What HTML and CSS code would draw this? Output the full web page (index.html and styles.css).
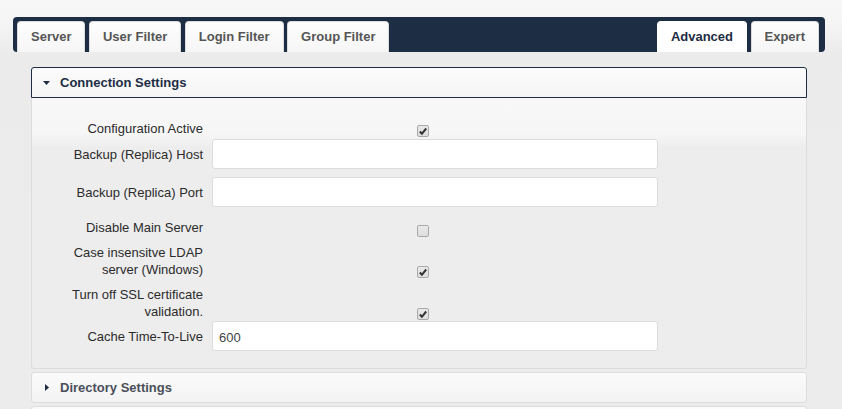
FILE: index.html
```html
<!DOCTYPE html>
<html lang="en">
<head>
<meta charset="utf-8">
<title>LDAP Advanced</title>
<link rel="stylesheet" href="styles.css">
</head>
<body>
<div class="page">
  <nav class="tabbar">
    <div class="tabgroup">
      <a class="tab">Server</a>
      <a class="tab">User Filter</a>
      <a class="tab">Login Filter</a>
      <a class="tab">Group Filter</a>
    </div>
    <div class="tabgroup">
      <a class="tab tab--active">Advanced</a>
      <a class="tab">Expert</a>
    </div>
  </nav>

  <div class="sections">
    <section class="acc acc--open">
      <h3 class="acc-head"><span class="caret"><svg width="7" height="4" viewBox="0 0 7 4"><path d="M0 0H7L3.5 4Z" fill="#1d2d44"/></svg></span>Connection Settings</h3>
      <div class="acc-body">
        <div class="row row--first row--check">
          <label class="lbl">Configuration Active</label>
          <span class="ctrl"><span class="cb"><svg width="11" height="11" viewBox="0 0 11 11"><path d="M2 5.5 L4.3 8 L9 2.2" fill="none" stroke="#333" stroke-width="2.2"/></svg></span></span>
        </div>
        <div class="row row--tight row--input">
          <label class="lbl">Backup (Replica) Host</label>
          <span class="ctrl"><input class="txt" type="text" value=""></span>
        </div>
        <div class="row row--input">
          <label class="lbl">Backup (Replica) Port</label>
          <span class="ctrl"><input class="txt" type="text" value=""></span>
        </div>
        <div class="row row--loose row--check">
          <label class="lbl">Disable Main Server</label>
          <span class="ctrl"><span class="cb cb--low"></span></span>
        </div>
        <div class="row row--check">
          <label class="lbl">Case insensitve LDAP server (Windows)</label>
          <span class="ctrl"><span class="cb"><svg width="11" height="11" viewBox="0 0 11 11"><path d="M2 5.5 L4.3 8 L9 2.2" fill="none" stroke="#333" stroke-width="2.2"/></svg></span></span>
        </div>
        <div class="row row--check">
          <label class="lbl">Turn off SSL certificate validation.</label>
          <span class="ctrl"><span class="cb"><svg width="11" height="11" viewBox="0 0 11 11"><path d="M2 5.5 L4.3 8 L9 2.2" fill="none" stroke="#333" stroke-width="2.2"/></svg></span></span>
        </div>
        <div class="row row--tight1 row--input">
          <label class="lbl">Cache Time-To-Live</label>
          <span class="ctrl"><input class="txt" type="text" value="600"></span>
        </div>
      </div>
    </section>

    <section class="acc">
      <h3 class="acc-head acc-head--closed"><span class="caret"><svg width="4" height="7" viewBox="0 0 4 7"><path d="M0 0V7L4 3.5Z" fill="#1d2d44"/></svg></span>Directory Settings</h3>
    </section>

    <section class="acc">
      <div class="acc-head acc-head--closed"></div>
    </section>
  </div>
</div>
</body>
</html>
```
FILE: styles.css
```css
* { box-sizing: border-box; }

html, body {
  margin: 0;
  height: 100%;
}

body {
  font-family: "Liberation Sans", Arial, sans-serif;
  font-size: 13px;
  color: #2b2b2b;
  background: linear-gradient(to bottom, #f7f7f7 0, #f5f5f5 22px, #ebebeb 55px, #ececec 100%);
  overflow: hidden;
}

.page {
  padding-top: 17px;
}

/* ---------- tab bar ---------- */
.tabbar {
  margin: 0 17px 0 13px;
  height: 35px;
  padding: 4px 6px 0 4px;
  background: #1d2d44;
  border-radius: 4px;
  display: flex;
  justify-content: space-between;
}

.tabgroup {
  display: flex;
  gap: 3.5px;
}

.tab {
  display: block;
  height: 31px;
  line-height: 30px;
  padding: 0 13px;
  border: 1px solid #dcdcdc;
  border-bottom: none;
  border-radius: 4px 4px 0 0;
  background: linear-gradient(to bottom, #fdfdfd, #f6f6f6);
  color: #555;
  font-weight: bold;
  font-size: 13px;
  text-decoration: none;
  white-space: nowrap;
}

.tab--active {
  background: #fff;
  border-color: #fff;
  color: #1d2d44;
}

/* ---------- accordion ---------- */
.sections {
  margin: 15px 0 0 31px;
  width: 776px;
}

.acc + .acc {
  margin-top: 3px;
}

.acc-head {
  margin: 0;
  height: 31px;
  line-height: 29px;
  padding-left: 11px;
  border: 1px solid #1d2d44;
  border-radius: 3px 3px 0 0;
  background: linear-gradient(to bottom, #fbfbfb, #f5f5f5);
  color: #1d2d44;
  font-size: 13px;
  font-weight: bold;
  display: flex;
  align-items: center;
}

.acc-head--closed {
  border-color: #dcdcdc;
  border-radius: 3px;
  background: linear-gradient(to bottom, #fbfbfb, #f3f3f3);
  color: #4a4f5a;
}

.caret {
  width: 7px;
  margin-right: 10px;
  display: flex;
  justify-content: center;
  align-items: center;
}

.acc-head--closed .caret {
  justify-content: flex-start;
  padding-left: 2px;
}

.acc-body {
  border: 1px solid #dcdcdc;
  border-top: none;
  border-radius: 0 0 3px 3px;
  background: linear-gradient(to bottom, #f8f8f8 0, #f6f6f6 36px, #ededed 50px, #ededed 100%);
  padding: 22px 0 17px;
}

/* ---------- form rows ---------- */
.row {
  display: flex;
  margin-top: 8px;
}

.row--first { margin-top: 0; }
.row--tight { margin-top: 2px; }
.row--tight1 { margin-top: 1px; }
.row--loose { margin-top: 12px; }

.row--check { align-items: flex-end; }
.row--input { align-items: center; }

.lbl {
  width: 140px;
  margin-left: 31px;
  text-align: right;
  line-height: 17px;
  color: #2b2b2b;
}

.ctrl {
  margin-left: 9px;
  display: flex;
}

.txt {
  width: 446px;
  height: 30px;
  margin: 0;
  padding: 3px 6px 0;
  border: 1px solid #dcdcdc;
  border-radius: 3px;
  background: #fff;
  font-family: "Liberation Sans", Arial, sans-serif;
  font-size: 13px;
  color: #444;
  outline: none;
}

.cb {
  margin-left: 205px;
  width: 12px;
  height: 12px;
  border: 1px solid #a9a9a9;
  border-radius: 2px;
  background: linear-gradient(to bottom, #e9e9e9, #dedede);
  display: flex;
  align-items: center;
  justify-content: center;
}

.cb--low {
  margin-bottom: -1px;
}
```
